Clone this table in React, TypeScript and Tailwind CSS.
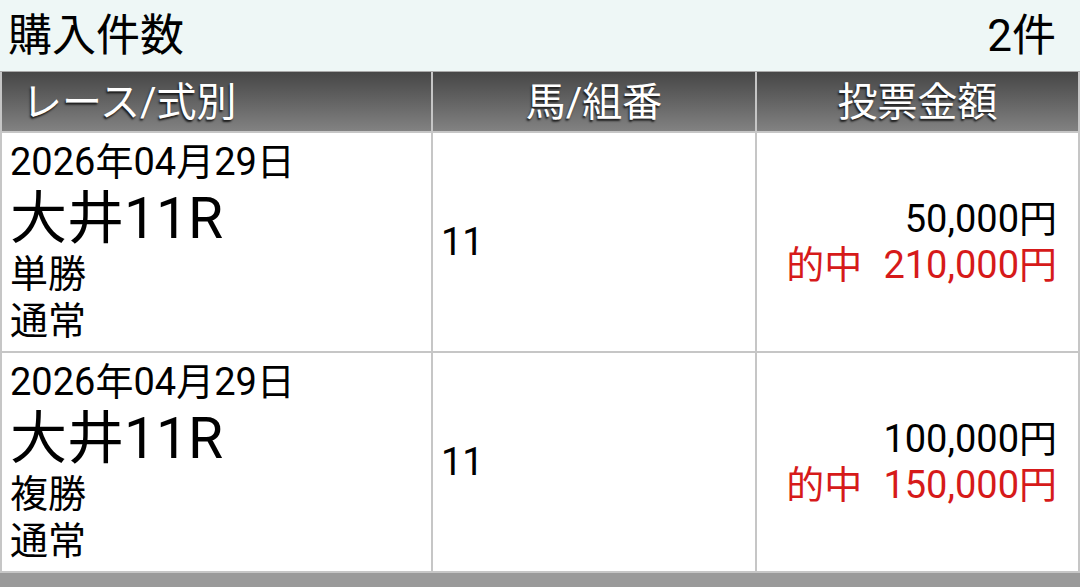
import React from 'react';

interface Bet {
  date: string;
  race: string;
  type: string;
  mode: string;
  horse: string;
  amount: string;
  payout: string;
}

const bets: Bet[] = [
  { date: '2026年04月29日', race: '大井11R', type: '単勝', mode: '通常', horse: '11', amount: '50,000円', payout: '210,000円' },
  { date: '2026年04月29日', race: '大井11R', type: '複勝', mode: '通常', horse: '11', amount: '100,000円', payout: '150,000円' },
];

const font = { fontFamily: 'Roboto, "Noto Sans CJK JP", sans-serif' };

const headCell = 'h-[59px] pt-[3px] flex items-center text-[40px] text-white bg-gradient-to-b from-[#474747] to-[#828282] [text-shadow:-1px_2px_2px_#1a1a1a]';

export default function App() {
  return (
    <div style={font} className="w-[1080px] h-[587px] bg-white overflow-hidden text-black">
      {/* summary */}
      <div className="h-[71px] bg-[#eef7f6] flex items-center justify-between pl-[8px] pr-[24px] text-[44px]">
        <span>購入件数</span>
        <span>2件</span>
      </div>

      <div className="grid grid-cols-[429px_322px_321px] gap-x-[2px] bg-[#c6c6c6] px-[2px] border-t border-[#a9a9a9]">
        <div className={`${headCell} pl-[20px]`}>レース/式別</div>
        <div className={`${headCell} justify-center`}>馬/組番</div>
        <div className={`${headCell} justify-center`}>投票金額</div>

        {bets.map((b, i) => (
          <React.Fragment key={i}>
            <div className="bg-white mt-[2px] pl-[8px] py-[6px]">
              <div className="text-[38px] leading-[47px]">{b.date}</div>
              <div className="text-[57px] leading-[65px]">{b.race}</div>
              <div className="text-[38px] leading-[47px]">{b.type}</div>
              <div className="text-[38px] leading-[47px]">{b.mode}</div>
            </div>
            <div className="bg-white mt-[2px] pl-[8px] flex items-center text-[38px]">{b.horse}</div>
            <div className="bg-white mt-[2px] pr-[21px] flex flex-col items-end justify-center text-[38px] leading-[46px]">
              <div>{b.amount}</div>
              <div className="text-[#d61a1a]">
                的中<span className="ml-[21px]">{b.payout}</span>
              </div>
            </div>
          </React.Fragment>
        ))}
      </div>
      <div className="h-[2px] bg-[#c6c6c6]" />
      <div className="h-[20px] bg-[#9a9a9a]" />
    </div>
  );
}
